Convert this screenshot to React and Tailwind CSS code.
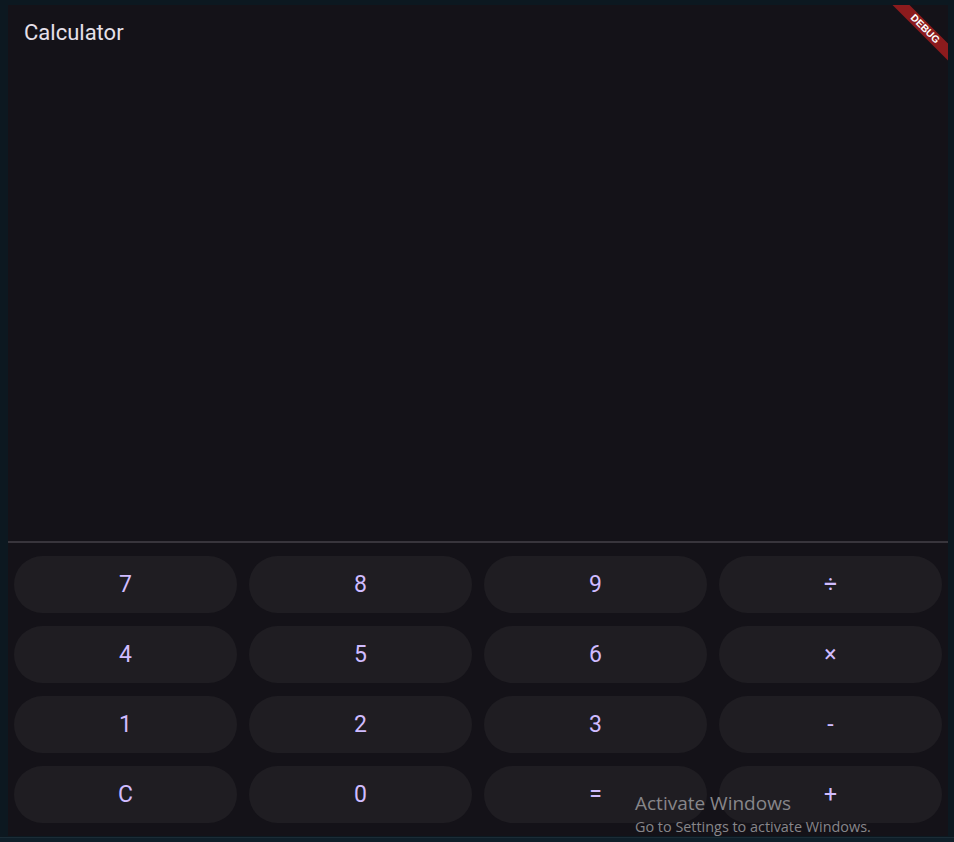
import React from "react";

const rows = [
  ["7", "8", "9", "÷"],
  ["4", "5", "6", "×"],
  ["1", "2", "3", "-"],
  ["C", "0", "=", "+"],
];

export default function App() {
  return (
    <div className="relative w-[954px] h-[842px] bg-[#0c1820] pt-[5px] pl-[8px] overflow-hidden" style={{ fontFamily: "Roboto, 'Liberation Sans', sans-serif" }}>
      <div className="relative w-[940px] h-[831px] bg-[#141218] flex flex-col overflow-hidden">
        <div className="h-[536px] flex flex-col">
          <div className="h-[56px] flex items-center pl-[16px]">
            <span className="text-[22px] text-[#e6e0e9] leading-none">Calculator</span>
          </div>
          <div className="flex-1" />
        </div>
        <div className="h-[2px] bg-[#38353c]" />
        <div className="grid grid-cols-4 gap-x-[12px] gap-y-[13px] px-[6px] py-[13px] auto-rows-[57px]">
          {rows.flat().map((k, i) => (
            <div key={i} className="rounded-full bg-[#1f1d22] flex items-center justify-center pt-[1px] text-[23px] text-[#d0bcff]">
              {k}
            </div>
          ))}
        </div>
        <div className="absolute top-0 right-0 w-[60px] h-[60px] overflow-hidden pointer-events-none">
          <div className="absolute left-[-13.5px] top-[17.5px] w-[100px] h-[12px] bg-[#8c1b1d] rotate-45 flex items-center justify-center">
            <span className="text-[10px] font-bold text-white leading-none" style={{ fontFamily: "'Liberation Sans', sans-serif" }}>DEBUG</span>
          </div>
        </div>
      </div>
      <div className="absolute left-0 bottom-0 w-full h-[5px] bg-[#0f1f29] border-t border-[#1b2c36]" />
      <div className="absolute left-[635px] top-[790px] text-[#87868a] pointer-events-none" style={{ fontFamily: "'Open Sans', 'Noto Sans', sans-serif" }}>
        <div className="text-[19px] leading-[27px]">Activate Windows</div>
        <div className="text-[14.4px] leading-[19px]">Go to Settings to activate Windows.</div>
      </div>
    </div>
  );
}
